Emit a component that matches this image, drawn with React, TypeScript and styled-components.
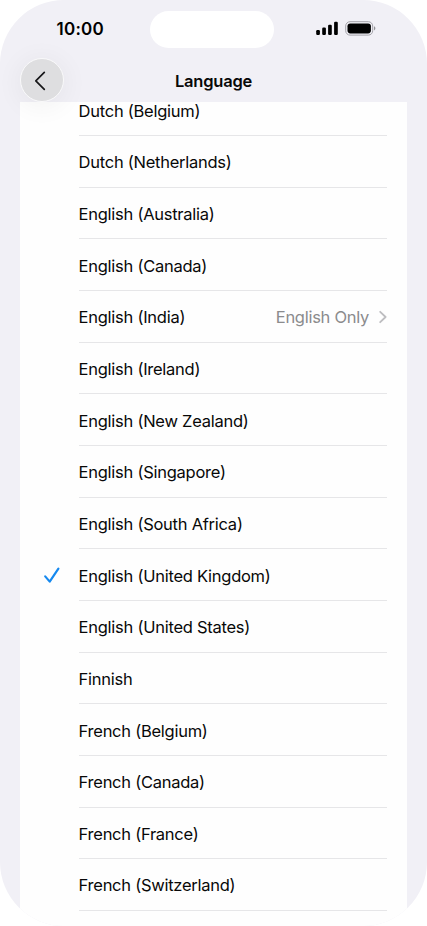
import React from "react";
import styled, { createGlobalStyle } from "styled-components";

const GlobalStyle = createGlobalStyle`
  body { margin: 0; background: #fff; }
  *, *::before, *::after { box-sizing: border-box; }
`;

const Screen = styled.main`
  width: 427px;
  height: 926px;
  display: flex;
  flex-direction: column;
  overflow: hidden;
  border-radius: 64px;
  background: #f1f0f6;
  color: #080808;
  font-family: Inter, "Liberation Sans", sans-serif;
`;

const StatusBar = styled.div`
  height: 58px;
  flex: none;
  display: grid;
  grid-template-columns: 150px 124px 1fr;
  align-items: center;
`;

const Clock = styled.time`
  padding-left: 56.5px;
  font-size: 17px;
  line-height: 22px;
  font-weight: 600;
  letter-spacing: 0.25px;
  color: #000;
`;

const Island = styled.div`
  height: 37px;
  border-radius: 19px;
  background: #fff;
`;

const Indicators = styled.div`
  display: flex;
  align-items: center;
  gap: 7px;
  padding: 0 0 1px 42px;
`;

const NavBar = styled.header`
  height: 44px;
  flex: none;
  display: grid;
  grid-template-columns: 64px 1fr 64px;
  align-items: center;
  position: relative;
  z-index: 1;
`;

const BackButton = styled.button`
  width: 44px;
  height: 44px;
  margin-left: 20px;
  padding: 0;
  display: grid;
  place-items: center;
  border: 1px solid #f9f9fa;
  border-radius: 50%;
  background: #dedee0;
  box-shadow: 0 3px 24px 4px rgba(0, 0, 0, 0.045);
`;

const Title = styled.h1`
  margin: 0;
  padding-top: 2px;
  text-align: center;
  font-size: 16.5px;
  line-height: 22px;
  font-weight: 600;
  letter-spacing: -0.22px;
  color: #080808;
`;

const ListViewport = styled.section`
  flex: 1;
  min-height: 0;
  margin: 0 20px;
  overflow: hidden;
  background: #fefefe;
`;

const List = styled.ul`
  margin: -17.7px 0 0;
  padding: 0;
  list-style: none;
`;

const Row = styled.li`
  height: 51.67px;
  display: grid;
  grid-template-columns: 58.6px 1fr;
  padding-right: 20px;
`;

const Mark = styled.span`
  display: flex;
  align-items: center;
  padding: 2px 0 0 23px;
`;

const RowContent = styled.div`
  display: flex;
  align-items: center;
  justify-content: space-between;
  padding-top: 2px;
  border-bottom: 1px solid #e6e6e8;
  font-size: 16.5px;
  line-height: 22px;
`;

const Label = styled.span`
  letter-spacing: -0.26px;
`;

const Detail = styled.span`
  display: flex;
  align-items: center;
  gap: 10px;
  color: #8b8b8d;
  letter-spacing: -0.28px;
`;

const SignalIcon = () => (
  <svg width="22" height="15" viewBox="0 0 22 15" fill="#000">
    <rect x="0.2" y="9" width="3.7" height="5" rx="1.2" />
    <rect x="6.2" y="6.5" width="3.7" height="7.5" rx="1.2" />
    <rect x="12.1" y="3.7" width="3.7" height="10.3" rx="1.2" />
    <rect x="18.1" y="0.7" width="3.7" height="13.3" rx="1.2" />
  </svg>
);

const BatteryIcon = () => (
  <svg width="31" height="15" viewBox="0 0 31 15">
    <rect x="0.7" y="0.7" width="27" height="13.4" rx="4.3" fill="none" stroke="#a3a2a8" />
    <rect x="2.5" y="2.4" width="23.4" height="10" rx="2.8" fill="#000" />
    <path d="M29 5.3c1.9.7 1.9 3.5 0 4.2z" fill="#929196" />
  </svg>
);

const BackIcon = () => (
  <svg width="42" height="42" viewBox="0 0 42 42" fill="none">
    <path d="M23.3 13.4 14.8 21.8l8.5 8.5" stroke="#171719" strokeWidth="1.7" strokeLinecap="round" strokeLinejoin="round" />
  </svg>
);

const CheckIcon = () => (
  <svg width="18" height="18" viewBox="0 0 18 18" fill="none">
    <path d="M2.2 9.4 6.7 14.6 15.4 1.7" stroke="#1689ef" strokeWidth="2.2" strokeLinecap="round" strokeLinejoin="round" />
  </svg>
);

const DisclosureIcon = () => (
  <svg width="8" height="14" viewBox="0 0 8 14" fill="none">
    <path d="M1.2 1.8 6.6 7 1.2 12.2" stroke="#bdbdc0" strokeWidth="1.8" strokeLinecap="round" strokeLinejoin="round" />
  </svg>
);

interface Language {
  name: string;
  detail?: string;
  selected?: boolean;
}

const languages: Language[] = [
  { name: "Dutch (Belgium)" },
  { name: "Dutch (Netherlands)" },
  { name: "English (Australia)" },
  { name: "English (Canada)" },
  { name: "English (India)", detail: "English Only" },
  { name: "English (Ireland)" },
  { name: "English (New Zealand)" },
  { name: "English (Singapore)" },
  { name: "English (South Africa)" },
  { name: "English (United Kingdom)", selected: true },
  { name: "English (United States)" },
  { name: "Finnish" },
  { name: "French (Belgium)" },
  { name: "French (Canada)" },
  { name: "French (France)" },
  { name: "French (Switzerland)" },
];

export default function App() {
  return (
    <>
      <GlobalStyle />
      <Screen>
        <StatusBar>
          <Clock>10:00</Clock>
          <Island />
          <Indicators>
            <SignalIcon />
            <BatteryIcon />
          </Indicators>
        </StatusBar>
        <NavBar>
          <BackButton aria-label="Back">
            <BackIcon />
          </BackButton>
          <Title>Language</Title>
        </NavBar>
        <ListViewport>
          <List>
            {languages.map(({ name, detail, selected }) => (
              <Row key={name}>
                <Mark>{selected && <CheckIcon />}</Mark>
                <RowContent>
                  <Label>{name}</Label>
                  {detail && (
                    <Detail>
                      {detail}
                      <DisclosureIcon />
                    </Detail>
                  )}
                </RowContent>
              </Row>
            ))}
          </List>
        </ListViewport>
      </Screen>
    </>
  );
}
